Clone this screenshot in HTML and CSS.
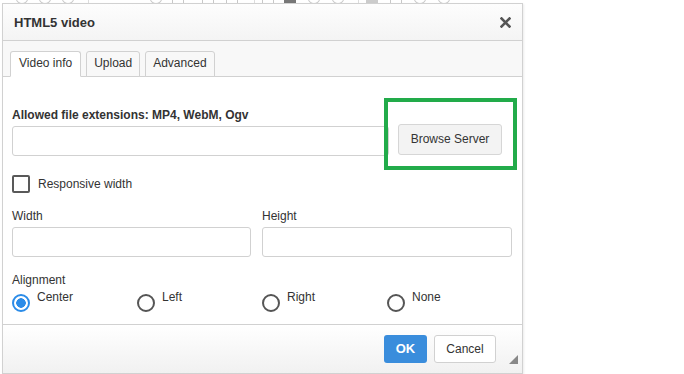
FILE: index.html
```html
<!DOCTYPE html>
<html lang="en">
<head>
    <meta charset="UTF-8">
    <title>HTML5 video</title>
    <link rel="stylesheet" href="styles.css">
</head>
<body>
<div class="editor">
    <!-- toolbar behind the dialog -->
    <div class="toolbar">
        <span class="tb-icon round" style="left: 16px"></span>
        <span class="tb-icon round" style="left: 39px"></span>
        <span class="tb-icon round" style="left: 62px"></span>
        <span class="tb-sep" style="left: 88px"></span>
        <span class="tb-icon round" style="left: 150px"></span>
        <span class="tb-icon" style="left: 172px"></span>
        <span class="tb-icon" style="left: 202px"></span>
        <span class="tb-icon" style="left: 226px"></span>
        <span class="tb-sep" style="left: 254px"></span>
        <span class="tb-icon" style="left: 262px"></span>
        <span class="tb-icon dark" style="left: 284px"></span>
        <span class="tb-icon round" style="left: 308px"></span>
        <span class="tb-icon round" style="left: 332px"></span>
        <span class="tb-sep" style="left: 358px"></span>
        <span class="tb-icon grey" style="left: 366px"></span>
        <span class="tb-icon" style="left: 390px"></span>
        <span class="tb-icon round" style="left: 414px"></span>
        <span class="tb-icon round" style="left: 438px"></span>
    </div>

    <!-- dialog -->
    <div class="dialog">
        <div class="dlg-title">
            <span>HTML5 video</span>
            <svg class="close" width="11" height="11" viewBox="0 0 11 11">
                <path d="M1.5 1.5 L9.5 9.5 M9.5 1.5 L1.5 9.5" stroke="#555" stroke-width="2.6" stroke-linecap="square"/>
            </svg>
        </div>
        <div class="tabs">
            <span class="tab active">Video info</span>
            <span class="tab">Upload</span>
            <span class="tab">Advanced</span>
        </div>
        <div class="dlg-body">
            <div class="label bold">Allowed file extensions: MP4, WebM, Ogv</div>
            <div class="file-row">
                <div class="input"></div>
                <span class="btn browse">Browse Server</span>
            </div>
            <label class="check">
                <span class="checkbox"></span>
                <span>Responsive width</span>
            </label>
            <div class="size-row">
                <div class="field">
                    <div class="label">Width</div>
                    <div class="input"></div>
                </div>
                <div class="field">
                    <div class="label">Height</div>
                    <div class="input"></div>
                </div>
            </div>
            <div class="label">Alignment</div>
            <div class="radios">
                <span class="radio-item"><span class="radio checked"></span>Center</span>
                <span class="radio-item"><span class="radio"></span>Left</span>
                <span class="radio-item"><span class="radio"></span>Right</span>
                <span class="radio-item"><span class="radio"></span>None</span>
            </div>
        </div>
        <div class="dlg-foot">
            <span class="btn ok">OK</span>
            <span class="btn cancel">Cancel</span>
            <span class="resize"></span>
        </div>
        <!-- highlight box -->
        <div class="highlight"></div>
    </div>
</div>
</body>
</html>
```

FILE: styles.css
```css
*{
    margin: 0;
    padding: 0;
    box-sizing: border-box;
}
body{
    background: #fff;
    font-family: "Liberation Sans", Arial, sans-serif;
    font-size: 12px;
    color: #333;
}
.editor{
    position: relative;
    width: 684px;
    height: 374px;
}
/*工具栏*/
.toolbar{
    height: 12px;
    position: relative;
}
.tb-icon{
    position: absolute;
    top: -6px;
    width: 12px;
    height: 10px;
    border: 1px solid #c8c8c8;
}
.tb-icon.round{
    border-radius: 50%;
}
.tb-icon.dark{
    background: #777;
    border-color: #777;
}
.tb-icon.grey{
    background: #ccc;
    border-color: #ccc;
}
.tb-sep{
    position: absolute;
    top: 0;
    width: 1px;
    height: 4px;
    background: #ddd;
}

/*对话框*/
.dialog{
    position: absolute;
    left: 2px;
    top: 3px;
    width: 521px;
    height: 371px;
    border: 1px solid #d1d1d1;
    background: #fff;
    box-shadow: 1px 1px 2px rgba(0, 0, 0, 0.08);
    display: flex;
    flex-direction: column;
}
.dlg-title{
    height: 37px;
    flex: none;
    display: flex;
    align-items: center;
    justify-content: space-between;
    padding: 0 11px 0 11px;
    font-size: 13px;
    font-weight: bold;
    color: #333;
    background: linear-gradient(#fdfdfd, #f4f4f4);
    border-bottom: 1px solid #d1d1d1;
}
.tabs{
    height: 36px;
    flex: none;
    display: flex;
    align-items: flex-end;
    gap: 5px;
    padding-left: 7px;
    background: #f8f8f8;
    border-bottom: 1px solid #d1d1d1;
}
.tab{
    height: 26px;
    line-height: 23px;
    padding: 0 7px;
    margin-bottom: -1px;
    border: 1px solid #d1d1d1;
    border-radius: 3px 3px 0 0;
    background: #f8f8f8;
    color: #333;
}
.tab.active{
    padding: 0 8px;
    background: #fff;
    border-bottom-color: #fff;
}
.dlg-body{
    flex: 1;
    padding: 30px 10px 0 9px;
}
.label{
    line-height: 16px;
}
.bold{
    font-weight: bold;
}
.input{
    height: 30px;
    border: 1px solid #d1d1d1;
    border-radius: 3px;
    background: #fff;
}
.file-row{
    display: flex;
    align-items: center;
    gap: 9px;
    margin-top: 3px;
}
.file-row .input{
    flex: 1;
}
.btn{
    display: inline-block;
    border-radius: 3px;
    text-align: center;
}
.browse{
    width: 104px;
    height: 31px;
    line-height: 29px;
    margin-right: 10px;
    margin-top: -3px;
    background: #f3f3f3;
    border: 1px solid #d6d6d6;
    color: #333;
}
.check{
    display: flex;
    align-items: center;
    gap: 8px;
    margin-top: 19px;
    height: 18px;
}
.checkbox{
    width: 18px;
    height: 18px;
    border: 2px solid #595959;
    border-radius: 2px;
}
.size-row{
    display: grid;
    grid-template-columns: 1fr 1fr;
    margin-top: 15px;
}
.size-row .field:first-child{
    padding-right: 11px;
}
.size-row .label{
    margin-bottom: 3px;
}
.size-row + .label{
    margin-top: 15px;
}
.radios{
    display: flex;
    margin-top: 2px;
}
.radio-item{
    width: 125px;
    display: flex;
    align-items: flex-start;
    gap: 7px;
    line-height: 14px;
}
.radio{
    width: 18px;
    height: 18px;
    margin-top: 4px;
    border: 2px solid #555;
    border-radius: 50%;
    flex: none;
}
.radio.checked{
    border-color: #2c8ce8;
    background: radial-gradient(circle, #2c8ce8 0, #2c8ce8 4.5px, #fff 5px);
}
.dlg-foot{
    height: 49px;
    flex: none;
    position: relative;
    display: flex;
    align-items: center;
    justify-content: flex-end;
    gap: 7px;
    padding: 0 26px 0 0;
    border-top: 1px solid #d1d1d1;
    background: linear-gradient(#fff, #f1f1f1);
}
.ok{
    width: 43px;
    height: 28px;
    line-height: 28px;
    background: #3a8ddc;
    color: #fff;
    font-weight: bold;
    font-size: 13px;
}
.cancel{
    width: 62px;
    height: 28px;
    line-height: 26px;
    background: #fff;
    border: 1px solid #d1d1d1;
    color: #333;
}
.resize{
    position: absolute;
    right: 4px;
    bottom: 9px;
    width: 0;
    height: 0;
    border-left: 9px solid transparent;
    border-bottom: 9px solid #888;
}
/*高亮框*/
.highlight{
    position: absolute;
    left: 381px;
    top: 94px;
    width: 133px;
    height: 72px;
    border: 4px solid #22ab4a;
}
```
